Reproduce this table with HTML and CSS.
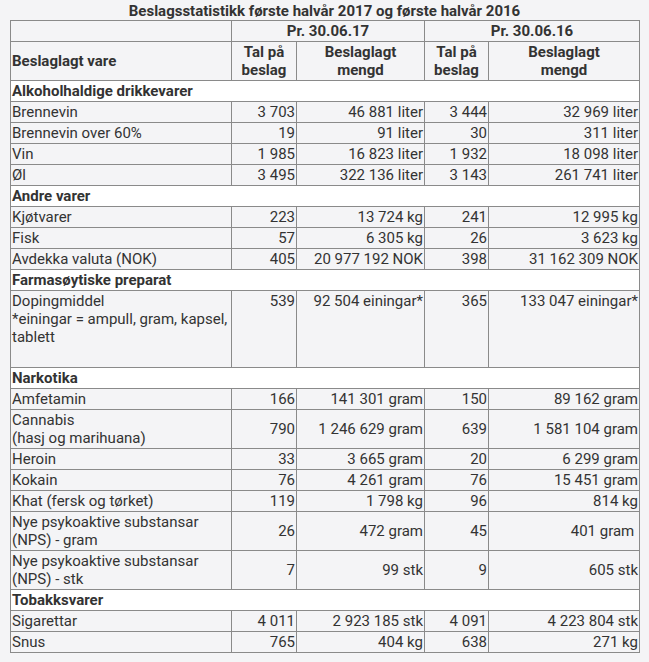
FILE: index.html
```html
<!DOCTYPE html>
<html lang="nn">
<head>
<meta charset="utf-8">
<title>Beslagsstatistikk</title>
<link rel="stylesheet" href="styles.css">
</head>
<body>
<div class="wrap">
<div class="caption">Beslagsstatistikk første halvår 2017 og første halvår 2016</div>
<table class="stats">
<colgroup>
<col class="c1"><col class="c2"><col class="c3"><col class="c4"><col class="c5">
</colgroup>
<thead>
<tr class="h1"><th></th><th colspan="2">Pr. 30.06.17</th><th colspan="2">Pr. 30.06.16</th></tr>
<tr class="h2"><th class="left">Beslaglagt vare</th><th>Tal på<br>beslag</th><th>Beslaglagt<br>mengd</th><th>Tal på<br>beslag</th><th>Beslaglagt<br>mengd</th></tr>
</thead>
<tbody>
<tr class="sec"><td colspan="5">Alkoholhaldige drikkevarer</td></tr>
<tr><td>Brennevin</td><td>3 703</td><td>46 881 liter</td><td>3 444</td><td>32 969 liter</td></tr>
<tr><td>Brennevin over 60%</td><td>19</td><td>91 liter</td><td>30</td><td>311 liter</td></tr>
<tr><td>Vin</td><td>1 985</td><td>16 823 liter</td><td>1 932</td><td>18 098 liter</td></tr>
<tr><td>Øl</td><td>3 495</td><td>322 136 liter</td><td>3 143</td><td>261 741 liter</td></tr>
<tr class="sec"><td colspan="5">Andre varer</td></tr>
<tr><td>Kjøtvarer</td><td>223</td><td>13 724 kg</td><td>241</td><td>12 995 kg</td></tr>
<tr><td>Fisk</td><td>57</td><td>6 305 kg</td><td>26</td><td>3 623 kg</td></tr>
<tr><td>Avdekka valuta (NOK)</td><td>405</td><td>20 977 192 NOK</td><td>398</td><td>31 162 309 NOK</td></tr>
<tr class="sec"><td colspan="5">Farmasøytiske preparat</td></tr>
<tr class="tall"><td>Dopingmiddel<br>*einingar = ampull, gram, kapsel, tablett</td><td>539</td><td>92 504 einingar*</td><td>365</td><td>133 047 einingar*</td></tr>
<tr class="sec"><td colspan="5">Narkotika</td></tr>
<tr><td>Amfetamin</td><td>166</td><td>141 301 gram</td><td>150</td><td>89 162 gram</td></tr>
<tr><td>Cannabis<br>(hasj og marihuana)</td><td>790</td><td>1 246 629 gram</td><td>639</td><td>1 581 104 gram</td></tr>
<tr><td>Heroin</td><td>33</td><td>3 665 gram</td><td>20</td><td>6 299 gram</td></tr>
<tr><td>Kokain</td><td>76</td><td>4 261 gram</td><td>76</td><td>15 451 gram</td></tr>
<tr><td>Khat (fersk og tørket)</td><td>119</td><td>1 798 kg</td><td>96</td><td>814 kg</td></tr>
<tr><td>Nye psykoaktive substansar<br>(NPS) - gram</td><td>26</td><td>472 gram</td><td>45</td><td>401 gram&nbsp;</td></tr>
<tr><td>Nye psykoaktive substansar<br>(NPS) - stk</td><td>7</td><td>99 stk</td><td>9</td><td>605 stk</td></tr>
<tr class="sec"><td colspan="5">Tobakksvarer</td></tr>
<tr><td>Sigarettar</td><td>4 011</td><td>2 923 185 stk</td><td>4 091</td><td>4 223 804 stk</td></tr>
<tr><td>Snus</td><td>765</td><td>404 kg</td><td>638</td><td>271 kg</td></tr>
</tbody>
</table>
</div>
</body>
</html>
```
FILE: styles.css
```css
html, body {
  margin: 0;
  padding: 0;
  background: #f4f4f6;
}
body {
  font-family: Roboto, "Liberation Sans", sans-serif;
  font-size: 15px;
  color: #333;
}
.wrap {
  padding: 2px 10px 0 10px;
}
.caption {
  text-align: center;
  font-weight: bold;
  line-height: 18px;
  color: #333;
}
.stats {
  width: 629px;
  border-collapse: collapse;
  table-layout: fixed;
  border: 1px solid #333;
  background: #f4f4f6;
}
.c1 { width: 221px; }
.c2 { width: 65px; }
.c3 { width: 128px; }
.c4 { width: 64px; }
.c5 { width: 151px; }
.stats th, .stats td {
  border: 1px solid #8a8a8a;
  padding: 1px 1px;
  line-height: 18px;
  vertical-align: middle;
}
.stats th {
  font-weight: bold;
  text-align: center;
}
.stats th.left {
  text-align: left;
}
.stats td {
  text-align: right;
}
.stats td:first-child {
  text-align: left;
}
.stats tr.sec td {
  background: #fff;
  font-weight: bold;
  text-align: left;
}
.stats tr.tall td {
  vertical-align: top;
  height: 74px;
}
```
